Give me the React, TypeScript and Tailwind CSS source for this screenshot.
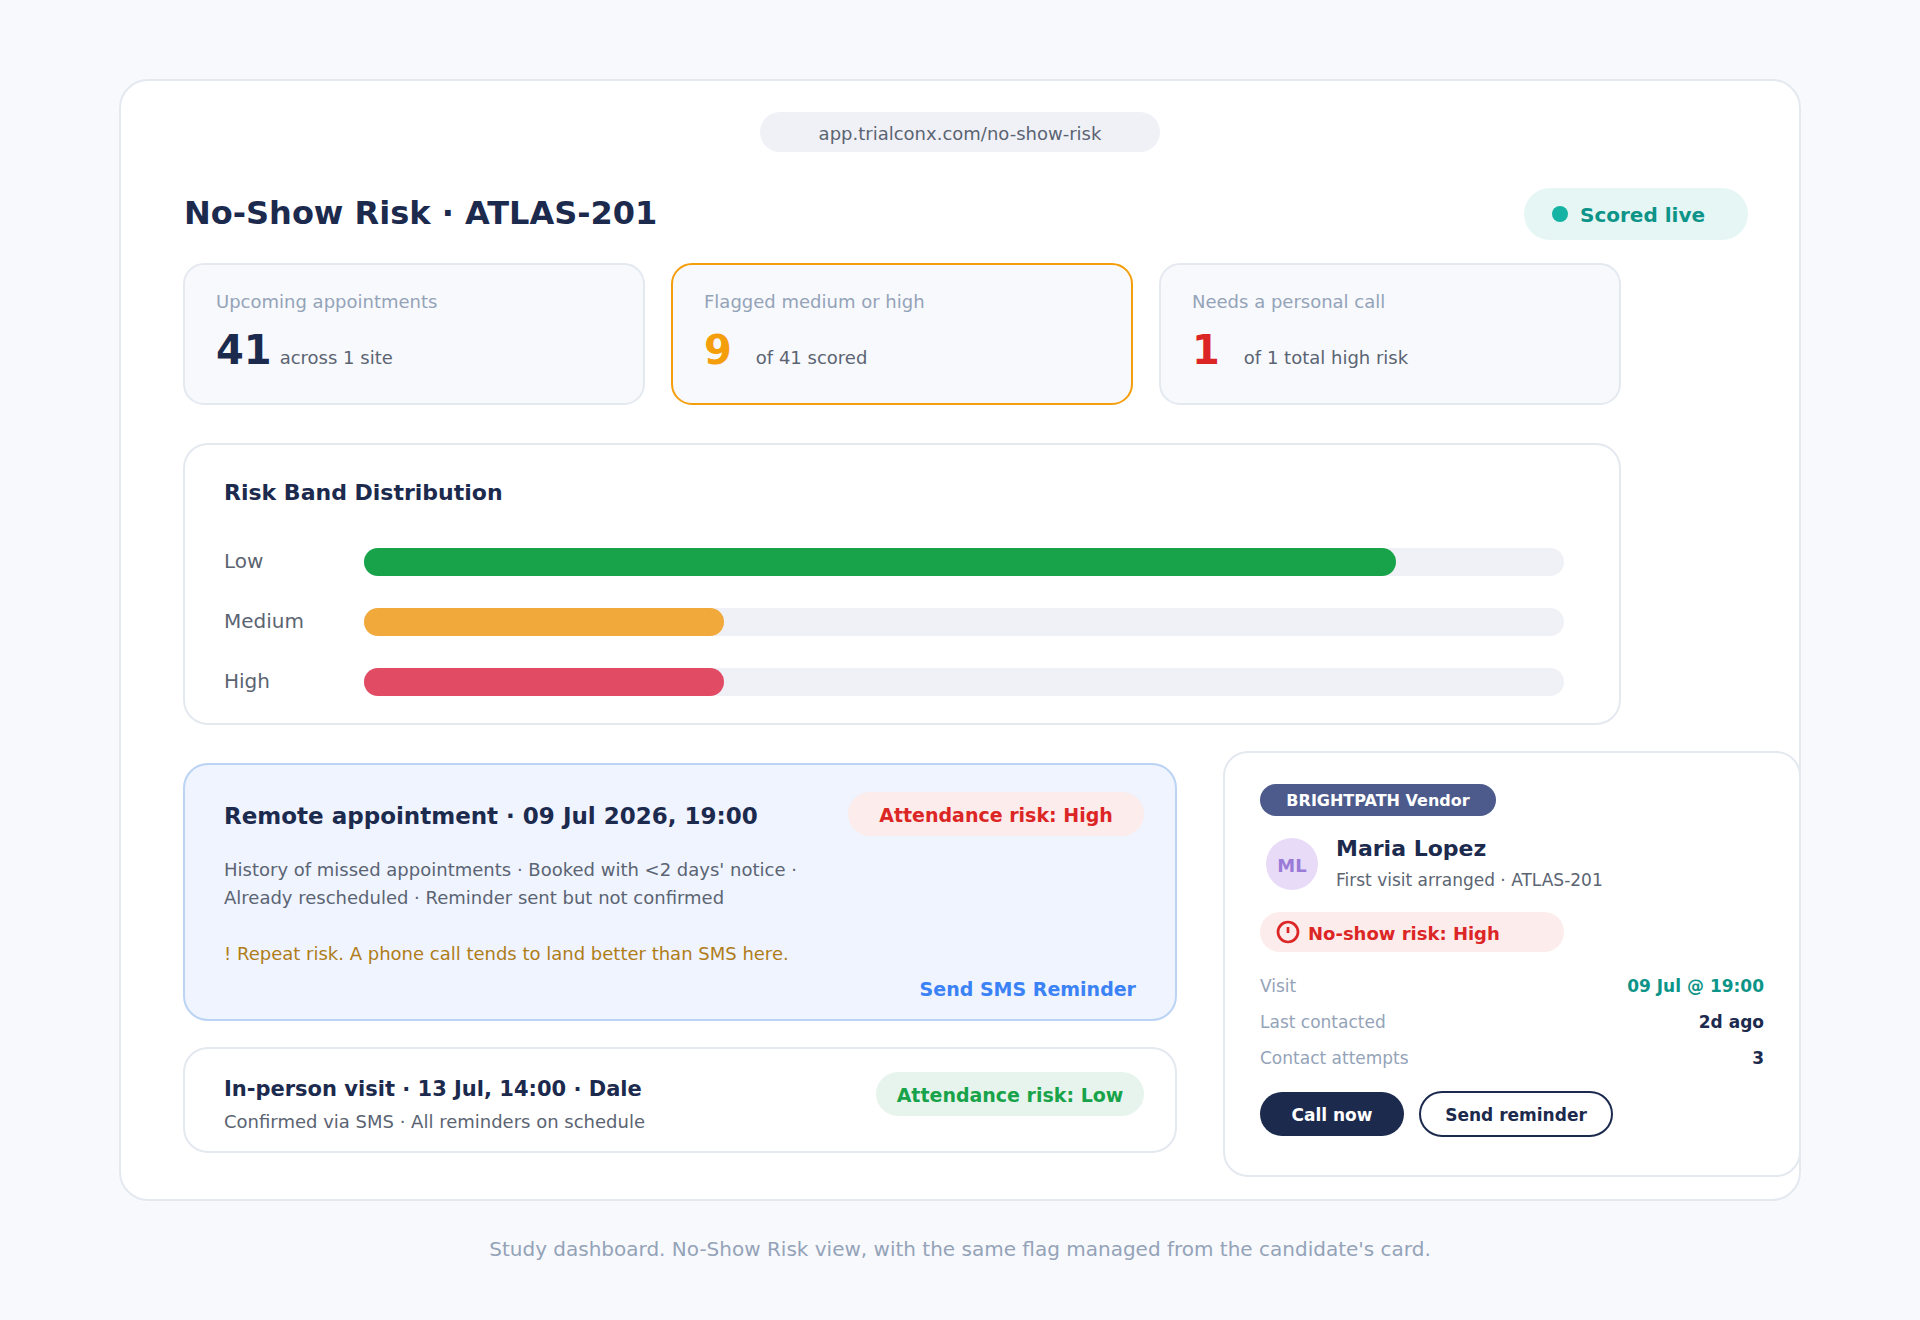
import clsx from "clsx";

interface Stat {
  label: string;
  value: string;
  note: string;
  valueClass: string;
  borderClass: string;
}

const stats: Stat[] = [
  { label: "Upcoming appointments", value: "41", note: "across 1 site", valueClass: "text-[#1c2a4e] mr-2", borderClass: "border-[#e4e9f0]" },
  { label: "Flagged medium or high", value: "9", note: "of 41 scored", valueClass: "text-[#f59e0b] mr-6", borderClass: "border-[#f59e0b]" },
  { label: "Needs a personal call", value: "1", note: "of 1 total high risk", valueClass: "text-[#dc2626] mr-6", borderClass: "border-[#e4e9f0]" },
];

const bands = [
  { label: "Low", percent: 86, color: "bg-[#18a34a]" },
  { label: "Medium", percent: 30, color: "bg-[#f1a93b]" },
  { label: "High", percent: 30, color: "bg-[#e14b64]" },
];

const details = [
  { label: "Visit", value: "09 Jul @ 19:00", color: "text-[#0d9488]" },
  { label: "Last contacted", value: "2d ago", color: "text-[#1c2a4e]" },
  { label: "Contact attempts", value: "3", color: "text-[#1c2a4e]" },
];

function StatCard({ stat }: { stat: Stat }) {
  return (
    <div className={clsx("rounded-[21px] border-2 bg-[#f8f9fd] px-[31px] pt-[25px] pb-[29px]", stat.borderClass)}>
      <p className="text-[18px] leading-6 text-[#94a3b8]">{stat.label}</p>
      <p className="mt-3 flex items-baseline">
        <span className={clsx("text-[40px] leading-[48px] font-bold", stat.valueClass)}>{stat.value}</span>
        <span className="text-[18px] leading-6 text-[#5b6472]">{stat.note}</span>
      </p>
    </div>
  );
}

function RiskBands() {
  return (
    <section className="mt-[38px] rounded-[25px] border-2 border-[#e4e9f0] bg-white pt-8 pr-[55px] pb-[27px] pl-[39px]">
      <h2 className="text-[22px] leading-8 font-bold">Risk Band Distribution</h2>
      <div className="mt-[39px] flex flex-col gap-8">
        {bands.map((band) => (
          <div key={band.label} className="flex h-7 items-start">
            <span className="w-[140px] shrink-0 text-[20px] leading-[26px] text-[#5b6472]">{band.label}</span>
            <div className="h-7 flex-1 rounded-full bg-[#f0f1f7]">
              <div className={clsx("h-7 rounded-full", band.color)} style={{ width: `${band.percent}%` }} />
            </div>
          </div>
        ))}
      </div>
    </section>
  );
}

function Appointments() {
  return (
    <div className="flex flex-1 flex-col gap-[26px] pt-3">
      <article className="rounded-[25px] border-2 border-[#bbd3f4] bg-[#eff4ff] pt-[27px] pr-[31px] pb-[17px] pl-[39px]">
        <div className="flex items-start justify-between">
          <h3 className="pt-2 text-[23px] leading-8 font-bold">Remote appointment · 09 Jul 2026, 19:00</h3>
          <span className="flex h-11 w-[296px] items-center justify-center rounded-full bg-[#fdecec] pt-0.5 text-[19px] font-bold text-[#dc2626]">
            Attendance risk: High
          </span>
        </div>
        <p className="mt-5 text-[18px] leading-7 text-[#5b6472]">
          History of missed appointments · Booked with &lt;2 days' notice ·
          <br />
          Already rescheduled · Reminder sent but not confirmed
        </p>
        <p className="mt-7 text-[18px] leading-7 text-[#b07d18]">
          ! Repeat risk. A phone call tends to land better than SMS here.
        </p>
        <div className="mt-2 flex justify-end pr-2">
          <button type="button" className="text-[19px] leading-[26px] font-bold text-[#3b82f6]">
            Send SMS Reminder
          </button>
        </div>
      </article>

      <article className="flex items-start justify-between rounded-[25px] border-2 border-[#e4e9f0] bg-white pt-[23px] pr-[31px] pb-[17px] pl-[39px]">
        <div className="pt-[3px]">
          <h3 className="text-[21px] leading-7 font-bold">In-person visit · 13 Jul, 14:00 · Dale</h3>
          <p className="mt-[7px] text-[18px] leading-6 text-[#5b6472]">Confirmed via SMS · All reminders on schedule</p>
        </div>
        <span className="flex h-11 w-[268px] items-center justify-center rounded-full bg-[#e7f4ed] pt-0.5 text-[19px] font-bold text-[#18a34a]">
          Attendance risk: Low
        </span>
      </article>
    </div>
  );
}

function CandidateCard() {
  return (
    <aside className="-mr-[2px] w-[578px] shrink-0 rounded-[25px] border-2 border-[#e4e9f0] bg-white px-[35px] pt-[31px] pb-[38px]">
      <span className="flex h-8 w-[236px] items-center justify-center rounded-full bg-[#4c5b8c] pt-0.5 text-[16px] font-bold text-white">
        BRIGHTPATH Vendor
      </span>

      <div className="mt-[19px] flex items-start gap-[18px] pl-1.5">
        <div className="mt-[3px] flex size-[52px] items-center justify-center rounded-full bg-[#e7dbf7] pt-0.5 text-[18px] font-bold text-[#9b7bd8]">
          ML
        </div>
        <div>
          <h3 className="text-[22px] leading-7 font-bold">Maria Lopez</h3>
          <p className="mt-[5px] text-[17px] leading-6 text-[#5b6472]">First visit arranged · ATLAS-201</p>
        </div>
      </div>

      <div className="mt-5 flex h-10 w-[304px] items-center gap-2 rounded-full bg-[#fdecec] pl-4 text-[#dc2626]">
        <svg viewBox="0 0 24 24" className="size-6" fill="none" stroke="currentColor" strokeWidth="2.7">
          <circle cx="12" cy="12" r="10" />
          <path d="M12 7v6" />
        </svg>
        <span className="pt-0.5 text-[18px] font-bold">No-show risk: High</span>
      </div>

      <dl className="mt-4">
        {details.map((row) => (
          <div key={row.label} className="flex justify-between text-[17px] leading-9">
            <dt className="text-[#94a3b8]">{row.label}</dt>
            <dd className={clsx("font-bold", row.color)}>{row.value}</dd>
          </div>
        ))}
      </dl>

      <div className="mt-[15px] flex items-center gap-[15px]">
        <button type="button" className="h-11 w-36 rounded-full bg-[#1c2a4e] pt-1 text-[17px] font-bold text-white">
          Call now
        </button>
        <button type="button" className="h-[46px] w-[194px] rounded-full border-2 border-[#1c2a4e] bg-white pt-1 text-[17px] font-bold">
          Send reminder
        </button>
      </div>
    </aside>
  );
}

export default function App() {
  return (
    <main className="min-h-screen bg-[#f8f9fd] px-[119px] pt-[79px] pb-8 font-['DejaVu_Sans',sans-serif] text-[#1c2a4e]">
      <div className="rounded-[29px] border-2 border-[#e4e9f0] bg-white pt-[31px] pb-[22px]">
        <div className="mx-auto flex h-10 w-[400px] items-center justify-center rounded-full bg-[#f0f1f7] pt-0.5 text-[18px] text-[#5b6472]">
          app.trialconx.com/no-show-risk
        </div>

        <header className="mt-9 flex items-start justify-between pr-[51px] pl-[63px]">
          <h1 className="text-[32px] leading-[50px] font-bold">No-Show Risk · ATLAS-201</h1>
          <div className="flex h-[52px] w-[224px] items-center gap-3 rounded-full bg-[#e6f6f4] pl-7">
            <span className="size-4 rounded-full bg-[#14b3a3]" />
            <span className="pt-0.5 text-[20px] font-bold text-[#0d9488]">Scored live</span>
          </div>
        </header>

        <div className="mt-[23px] pr-[178px] pl-[62px]">
          <section className="grid grid-cols-3 gap-[26px]">
            {stats.map((stat) => (
              <StatCard key={stat.label} stat={stat} />
            ))}
          </section>
          <RiskBands />
        </div>

        <div className="mt-[26px] flex items-start gap-[46px] pl-[62px]">
          <Appointments />
          <CandidateCard />
        </div>
      </div>

      <p className="mt-[34px] text-center text-[20px] leading-7 text-[#94a3b8]">
        Study dashboard. No-Show Risk view, with the same flag managed from the candidate's card.
      </p>
    </main>
  );
}
